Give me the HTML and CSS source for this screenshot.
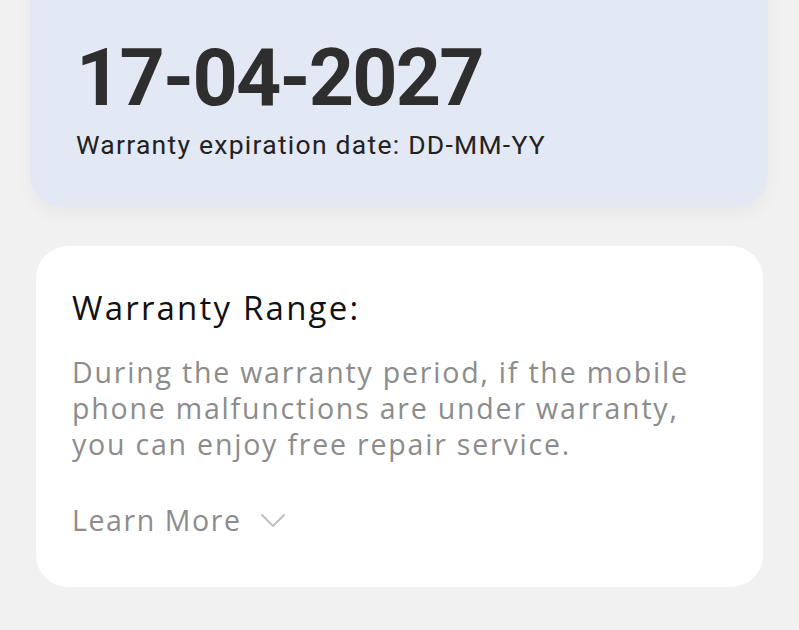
FILE: index.html
```html
<!DOCTYPE html>
<html>
<head>
<meta charset="utf-8">
<link rel="stylesheet" href="styles.css">
</head>
<body>
<div class="page">
  <section class="card card-date">
    <div class="date">17-04-2027</div>
    <div class="date-caption">Warranty expiration date: DD-MM-YY</div>
  </section>
  <section class="card card-range">
    <h2 class="range-title">Warranty Range:</h2>
    <p class="range-text">During the warranty period, if the mobile phone malfunctions are under warranty, you can enjoy free repair service.</p>
    <div class="learn-more">
      <span>Learn More</span>
      <svg class="chev" width="26" height="16" viewBox="0 0 26 16"><path d="M2 3 L13 14 L24 3" fill="none" stroke="#bdbdbd" stroke-width="1.8" stroke-linecap="round" stroke-linejoin="round"/></svg>
    </div>
  </section>
</div>
</body>
</html>
```

FILE: styles.css
```css
html, body {
  margin: 0;
  padding: 0;
  background: #f1f1f1;
  height: 100%;
  overflow: hidden;
}
.page {
  display: flex;
  flex-direction: column;
  gap: 39px;
}
.card {
  border-radius: 32px;
  box-sizing: border-box;
}
.card-date {
  margin: -60px 31px 0 30px;
  padding: 98.5px 46px 0;
  background: #e2e8f4;
  box-shadow: 0 8px 18px rgba(0,0,0,0.04);
  height: 267px;
}
.date {
  font-family: Roboto, "Liberation Sans", sans-serif;
  font-weight: 700;
  font-size: 79px;
  line-height: 79px;
  color: #2e2e2e;
  letter-spacing: -1.8px;
}
.date-caption {
  margin-top: 11.5px;
  font-family: Roboto, "Liberation Sans", sans-serif;
  font-size: 26.5px;
  line-height: 32px;
  letter-spacing: 1.25px;
  color: #222;
}
.card-range {
  margin: 0 36px;
  background: #fff;
  height: 341px;
  padding: 42px 36px 0;
}
.range-title {
  margin: 0;
  font-family: "Open Sans", sans-serif;
  font-weight: 400;
  font-size: 33px;
  line-height: 40px;
  letter-spacing: 2.2px;
  color: #111;
}
.range-text {
  margin: 26px 0 0;
  max-width: 640px;
  font-family: "Open Sans", sans-serif;
  font-size: 28.5px;
  line-height: 36px;
  letter-spacing: 1.8px;
  color: #8c8c8c;
}
.learn-more {
  margin-top: 40px;
  display: flex;
  align-items: center;
  gap: 18px;
  font-family: "Open Sans", sans-serif;
  font-size: 28.5px;
  line-height: 36px;
  letter-spacing: 1.6px;
  color: #8c8c8c;
}
```
